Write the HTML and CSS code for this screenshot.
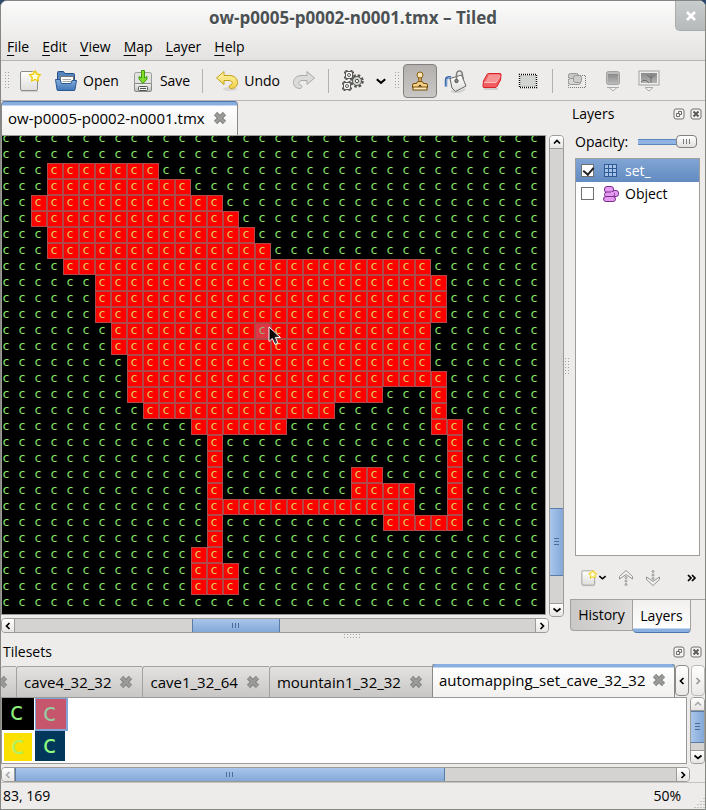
FILE: index.html
```html
<!DOCTYPE html>
<html lang="en">
<head>
<meta charset="utf-8">
<meta name="viewport" content="width=device-width, initial-scale=1">
<title>ow-p0005-p0002-n0001.tmx – Tiled</title>
<link rel="stylesheet" href="styles.css">
</head>
<body>
<svg class="defs" aria-hidden="true">
  <defs>
    <linearGradient id="paper" x1="0" y1="0" x2="0" y2="1"><stop offset="0" stop-color="#fff"/><stop offset="1" stop-color="#dededb"/></linearGradient>
    <linearGradient id="blue" x1="0" y1="0" x2="0" y2="1"><stop offset="0" stop-color="#86b0df"/><stop offset="1" stop-color="#3f74b5"/></linearGradient>
    <linearGradient id="gold" x1="0" y1="0" x2="0" y2="1"><stop offset="0" stop-color="#fff6b0"/><stop offset="1" stop-color="#f3d24a"/></linearGradient>
    <linearGradient id="grey" x1="0" y1="0" x2="0" y2="1"><stop offset="0" stop-color="#f4f4f2"/><stop offset="1" stop-color="#b9bbb6"/></linearGradient>
    <linearGradient id="dim" x1="0" y1="0" x2="0" y2="1"><stop offset="0" stop-color="#8a8a8a"/><stop offset="1" stop-color="#b4b4b4"/></linearGradient>
    <linearGradient id="arrow" x1="0" y1="0" x2="1" y2="1"><stop offset="0.4" stop-color="#000"/><stop offset="1" stop-color="#777"/></linearGradient>
    <symbol id="cross" viewBox="0 0 14 14"><path d="M2.500 2.500L11.500 11.500M11.500 2.500L2.500 11.500" fill="none" stroke="#858683" stroke-width="4.600"/><path d="M2.800 2.800L11.200 11.200M11.200 2.800L2.800 11.200" fill="none" stroke="#9b9c99" stroke-width="2.600"/></symbol>
    <symbol id="float" viewBox="0 0 12 12"><rect x="1" y="1" width="10" height="10" rx="2" fill="#f4f3f2" stroke="#70706e"/><path d="M5.500 5.500V3.500H8.500V6.500H7M3.500 5.500H6.500V8.500H3.500Z" fill="none" stroke="#6b6b69"/></symbol>
    <symbol id="shut" viewBox="0 0 12 12"><rect x="1" y="1" width="10" height="10" rx="2" fill="#f4f3f2" stroke="#70706e"/><path d="M3.500 3.500L8.500 8.500M8.500 3.500L3.500 8.500" stroke="#5b5b59" stroke-width="2"/></symbol>
    <symbol id="left" viewBox="0 0 10 10"><path d="M6.500 2L3.500 5L6.500 8" fill="none" stroke="currentColor" stroke-width="1.700"/></symbol>
    <symbol id="right" viewBox="0 0 10 10"><path d="M3.500 2L6.500 5L3.500 8" fill="none" stroke="currentColor" stroke-width="1.700"/></symbol>
    <symbol id="up" viewBox="0 0 10 10"><path d="M2 6.500L5 3.500L8 6.500" fill="none" stroke="currentColor" stroke-width="1.700"/></symbol>
    <symbol id="down" viewBox="0 0 10 10"><path d="M1.500 3.500L5 6.500L8.500 3.500" fill="none" stroke="currentColor" stroke-width="1.700"/></symbol>
    <symbol id="new" viewBox="0 0 24 24"><path d="M3 22.500H20" stroke="#cfcecb"/><rect x="2.500" y="2.500" width="17" height="19" rx="1.500" fill="url(#paper)" stroke="#8c8e89"/><circle cx="17" cy="7" r="5" fill="#fff7a8" opacity=".8"/><path d="M17 2L18.700 5.200L22.300 5.800L19.800 8.400L20.300 12L17 10.400L13.700 12L14.200 8.400L11.700 5.800L15.300 5.200Z" fill="#fffde0" stroke="#ecc90b" stroke-width="1.300"/></symbol>
    <symbol id="cog" viewBox="0 0 10 10"><path d="M2.500 0V10M7.500 0V10M0 2.500H10M0 7.500H10" stroke="#555753" stroke-width="2"/><rect x="1.500" y="1.500" width="7" height="7" rx="1.500" fill="#fafafa" stroke="#555753"/><circle cx="5" cy="5" r="1.500" fill="#fff" stroke="#555753"/></symbol>
    <symbol id="gear" viewBox="0 0 14 14"><circle cx="7" cy="7" r="5.500" fill="none" stroke="#555753" stroke-width="2.600" stroke-dasharray="2.500 1.820"/><circle cx="7" cy="7" r="4.500" fill="#d3d5d1" stroke="#555753"/><circle cx="7" cy="7" r="1.700" fill="#eee" stroke="#555753"/></symbol>
  </defs>
</svg>

<div class="window">
  <header class="titlebar">
    <h1>ow-p0005-p0002-n0001.tmx – Tiled</h1>
    <button class="window-close" aria-label="Close window"><svg width="12" height="12" viewBox="0 0 12 12"><path d="M2 2L10 10M10 2L2 10" stroke="#fff" stroke-width="2.600"/></svg></button>
  </header>

  <nav class="menubar">
    <button><u>F</u>ile</button><button><u>E</u>dit</button><button><u>V</u>iew</button><button><u>M</u>ap</button><button><u>L</u>ayer</button><button><u>H</u>elp</button>
  </nav>

  <div class="toolbar">
    <span class="handle"></span>
    <button class="tool" aria-label="New"><svg width="24" height="24"><use href="#new"/></svg></button>
    <button class="tool labelled"><svg width="24" height="24" viewBox="0 0 24 24"><path d="M3.500 20.500V3.500Q3.500 2.500 4.500 2.500H9.500L11 4.500H19.500Q20.500 4.500 20.500 5.500V20.500Z" fill="#5585bd" stroke="#23508a"/><rect x="6.500" y="7.500" width="13" height="10" fill="#fff" stroke="#777"/><path d="M8.500 10.500H17M8.500 12.500H17" stroke="#aaa"/><path d="M1.500 10.500H6L7.500 14.500H17L18 11.500H22.500L21 20.500Q21 21.500 20 21.500H4Q3 21.500 3 20.500Z" fill="url(#blue)" stroke="#2a5994"/></svg>Open</button>
    <button class="tool labelled"><svg width="24" height="24" viewBox="0 0 24 24"><rect x="3.500" y="3.500" width="17" height="13" rx="2" fill="#e2e3e0" stroke="#9a9c97"/><path d="M3.500 14.500H20.500V21Q20.500 22.500 19 22.500H5Q3.500 22.500 3.500 21Z" fill="url(#grey)" stroke="#888a85"/><rect x="7.500" y="17.500" width="9" height="4" rx="1" fill="#eee" stroke="#555753"/><path d="M9 19.500H15" stroke="#555753"/><path d="M10.500 1.500H13.500V9L16 7.500V10L12 14.500L8 10V7.500L10.500 9Z" fill="#7fdc2d" stroke="#3f9b08"/></svg>Save</button>
    <span class="rule"></span>
    <button class="tool labelled"><svg width="24" height="24" viewBox="0 0 24 24"><ellipse cx="15" cy="20" rx="7" ry="2" fill="#d8d7d4"/><path d="M1.500 9L9 2.500V6.500H14C20 6.500 22.500 10 22.500 13.500C22.500 17 20 19.500 16 19.500C14 19.500 13.500 16.500 15.500 16C18.500 15.300 17.500 11.500 14 11.500H9V15.500Z" fill="url(#gold)" stroke="#c2a116"/></svg>Undo</button>
    <button class="tool" aria-label="Redo"><svg width="24" height="24" viewBox="0 0 24 24"><path d="M22.500 9L15 2.500V6.500H10C4 6.500 1.500 10 1.500 13.500C1.500 17 4 19.500 8 19.500C10 19.500 10.500 16.500 8.500 16C5.500 15.300 6.500 11.500 10 11.500H15V15.500Z" fill="#dbdbd9" stroke="#aaaaa8"/></svg></button>
    <span class="rule"></span>
    <button class="tool" aria-label="Commands"><svg width="24" height="24" viewBox="0 0 24 24"><use href="#cog" x="3" y="1" width="10" height="10"/><use href="#cog" x="1" y="12" width="10" height="10"/><use href="#gear" x="9" y="5" width="14" height="14"/></svg></button>
    <button class="tool slim" aria-label="More commands"><svg width="12" height="12"><use href="#down"/></svg></button>
    <span class="handle"></span>
    <button class="tool pressed" aria-label="Stamp brush"><svg width="24" height="24" viewBox="0 0 24 24"><path d="M10.500 7.500H13.500L13 13H11Z" fill="#f2c777" stroke="#76500a"/><circle cx="12" cy="6" r="3" fill="#fae3b4" stroke="#8a5e0f"/><path d="M8.500 14.500Q8.500 12.500 11 12.500H13Q15.500 12.500 15.500 14.500H18Q19.500 14.500 19.500 16V18.500H4.500V16Q4.500 14.500 6 14.500Z" fill="#f5cf85" stroke="#76500a"/><rect x="5" y="18" width="14" height="3" fill="#fbe8bd" stroke="#76500a"/><path d="M10 17.500H14L12 15.500Z" fill="#402a00"/></svg></button>
    <button class="tool" aria-label="Bucket fill"><svg width="24" height="24" viewBox="0 0 24 24"><path d="M7 22Q15 25 21 20" fill="none" stroke="#d0d0cd" stroke-width="2"/><path d="M6 9.500L17.500 6L22 17L11.500 22.500L8 19Z" fill="url(#paper)" stroke="#656764"/><path d="M12.500 12V5Q13 1.500 16 2Q18.500 2.500 18.500 7L19.500 10" fill="none" stroke="#7d7f7a" stroke-width="1.500"/><circle cx="12.500" cy="12" r="1.700" fill="#888a85" stroke="#555753"/><path d="M7 8.500Q2 7.500 2 11V17.500" fill="none" stroke="#2f5fa4" stroke-width="2.400"/><path d="M7 8.500Q2.500 8 2.300 11V17" fill="none" stroke="#87a9da"/></svg></button>
    <button class="tool" aria-label="Eraser"><svg width="24" height="24" viewBox="0 0 24 24"><path d="M4 20H18" stroke="#cfcecb" stroke-width="2"/><path d="M8.500 4.500H20Q21.500 4.500 21 6.500L20.500 11L17 17.500Q16.500 18.500 15 18.500H4Q2.500 18.500 3 16.500L3.500 12L7 5.500Q7.500 4.500 8.500 4.500Z" fill="#f15d61" stroke="#d92228"/><path d="M9 5.500H20L16 13H5Z" fill="#f69494"/><path d="M4 13.500H16L20 7" fill="none" stroke="#fbc1c0"/></svg></button>
    <button class="tool" aria-label="Rectangular select"><svg width="24" height="24" viewBox="0 0 24 24"><rect x="3.500" y="5.500" width="17" height="13" fill="#d2d4d1" stroke="#fff"/><rect x="3.500" y="5.500" width="17" height="13" fill="none" stroke="#000" stroke-width="1.400" stroke-dasharray="1 1" stroke-dashoffset=".5"/></svg></button>
    <span class="rule"></span>
    <button class="tool" aria-label="Select objects"><svg width="24" height="24" viewBox="0 0 24 24"><rect x="3.500" y="6.500" width="17" height="12" fill="none" stroke="#777" stroke-dasharray="1 1" stroke-dashoffset=".5"/><rect x="3.500" y="4.500" width="10" height="5" rx="2" fill="#c9c9c7" stroke="#969694"/><rect x="3.500" y="9.500" width="12" height="6" rx="2" fill="#d7d7d5" stroke="#969694"/><rect x="8.500" y="6.500" width="8" height="7" rx="2" fill="#cbcbc9" stroke="#969694"/></svg></button>
    <button class="tool" aria-label="Insert tile object"><svg width="24" height="24" viewBox="0 0 24 24"><rect x="5.500" y="2.500" width="13" height="13" rx="2" fill="#bbb" stroke="#a2a2a0"/><rect x="7" y="5" width="10" height="9" fill="url(#dim)"/><path d="M6 18.500H18" stroke="#aaa"/><path d="M8 18.500H16L12 22Z" fill="#f1f1ef" stroke="#aaa"/></svg></button>
    <button class="tool" aria-label="Insert image"><svg width="24" height="24" viewBox="0 0 24 24"><rect x="2" y="2" width="20" height="14" fill="#eee" stroke="#a2a2a0"/><rect x="4" y="4" width="16" height="10" fill="url(#dim)"/><path d="M14 14V9M10 6L14 9L18 6M14 9V5M4 13Q8 9 12 14" fill="none" stroke="#6f6f6d"/><path d="M8 18.500H16L12 22Z" fill="#f1f1ef" stroke="#aaa"/></svg></button>
  </div>

  <div class="workspace">
    <main class="editor">
      <div class="tabs">
        <div class="tab active"><span>ow-p0005-p0002-n0001.tmx</span><button aria-label="Close tab"><svg width="14" height="14"><use href="#cross"/></svg></button></div>
      </div>
      <div class="scroll-area">
        <div class="view map-view">
          <div class="map" id="map"></div>
          <svg class="pointer" width="16" height="20" viewBox="0 0 16 20"><path d="M1 1V15.500L4.300 12.500L7 18.500L9.800 17L7.500 11.500H12.500Z" fill="url(#arrow)" stroke="#fff"/></svg>
        </div>
        <div class="bar vertical">
          <button aria-label="Scroll up"><svg width="10" height="10"><use href="#up"/></svg></button>
          <div class="track"><i class="space before-v"></i><i class="thumb thumb-v"></i></div>
          <button aria-label="Scroll down"><svg width="10" height="10"><use href="#down"/></svg></button>
        </div>
        <div class="bar horizontal">
          <button aria-label="Scroll left"><svg width="10" height="10"><use href="#left"/></svg></button>
          <div class="track"><i class="space before-h"></i><i class="thumb thumb-h"></i></div>
          <button aria-label="Scroll right"><svg width="10" height="10"><use href="#right"/></svg></button>
        </div>
      </div>
    </main>
    <div class="splitter upright"><i></i></div>
    <aside class="dock">
      <div class="dock-title"><h2>Layers</h2><button aria-label="Float Layers"><svg width="12" height="12"><use href="#float"/></svg></button><button aria-label="Close Layers"><svg width="12" height="12"><use href="#shut"/></svg></button></div>
      <div class="opacity"><label for="opacity">Opacity:</label><input type="range" id="opacity" value="100"></div>
      <ul class="layers">
        <li class="selected"><input type="checkbox" id="layer-set" checked><label for="layer-set"><svg width="16" height="16" viewBox="0 0 16 16"><rect x="1" y="1" width="13" height="13" fill="#2f5995"/><path d="M2 2h3v3h-3zM6 2h3v3h-3zM10 2h3v3h-3zM2 6h3v3h-3zM6 6h3v3h-3zM10 6h3v3h-3zM2 10h3v3h-3zM6 10h3v3h-3zM10 10h3v3h-3z" fill="#a5c2e8"/></svg>set_</label></li>
        <li><input type="checkbox" id="layer-object"><label for="layer-object"><svg width="16" height="16" viewBox="0 0 16 16"><g fill="#e39af0" stroke="#7b2d8c"><rect x="8.500" y="4.500" width="7" height="6" rx="2.500"/><rect x="1.500" y=".5" width="9" height="6" rx="2.500"/><rect x="1.500" y="6" width="10" height="5" rx="2.500"/><rect x=".5" y="10.500" width="12" height="5" rx="2.500"/></g><path d="M8 6H11V9H8Z" fill="#e39af0"/></svg>Object</label></li>
      </ul>
      <div class="layer-actions">
        <button aria-label="New layer"><svg width="18" height="20" viewBox="0 0 24 24"><use href="#new"/></svg><svg width="9" height="9" viewBox="0 0 10 10"><use href="#down"/></svg></button>
        <button aria-label="Raise layer"><svg width="16" height="18" viewBox="0 0 16 18"><path d="M1.500 10V7.500L8 1.500L14.500 7.500V10L8 5.500Z" fill="#f3f3f2" stroke="#939391"/><g fill="none" stroke="#939391"><circle cx="8" cy="8.500" r="1"/><circle cx="8" cy="12" r="1"/><circle cx="8" cy="15.500" r="1"/></g></svg></button>
        <button aria-label="Lower layer"><svg width="16" height="18" viewBox="0 0 16 18"><path d="M1.500 8V10.500L8 16.500L14.500 10.500V8L8 12.500Z" fill="#f3f3f2" stroke="#939391"/><g fill="none" stroke="#939391"><circle cx="8" cy="2.500" r="1"/><circle cx="8" cy="6" r="1"/><circle cx="8" cy="9.500" r="1"/></g></svg></button>
        <button class="more" aria-label="More layer actions"><svg width="10" height="10" viewBox="0 0 10 10"><path d="M1 2L4 5L1 8M5 2L8 5L5 8" fill="none" stroke="#000" stroke-width="1.700"/></svg></button>
      </div>
      <div class="dock-tabs"><button>History</button><button class="current">Layers</button></div>
    </aside>
  </div>

  <div class="splitter level"><i></i></div>

  <section class="tilesets">
    <div class="dock-title"><h2>Tilesets</h2><button aria-label="Float Tilesets"><svg width="12" height="12"><use href="#float"/></svg></button><button aria-label="Close Tilesets"><svg width="12" height="12"><use href="#shut"/></svg></button></div>
    <div class="tabs">
      <div class="tab cut"><button aria-label="Close tileset"><svg width="14" height="14"><use href="#cross"/></svg></button></div>
      <div class="tab"><span>cave4_32_32</span><button aria-label="Close tileset"><svg width="14" height="14"><use href="#cross"/></svg></button></div>
      <div class="tab"><span>cave1_32_64</span><button aria-label="Close tileset"><svg width="14" height="14"><use href="#cross"/></svg></button></div>
      <div class="tab"><span>mountain1_32_32</span><button aria-label="Close tileset"><svg width="14" height="14"><use href="#cross"/></svg></button></div>
      <div class="tab active"><span>automapping_set_cave_32_32</span><button aria-label="Close tileset"><svg width="14" height="14"><use href="#cross"/></svg></button></div>
      <div class="tab-scroll"><button aria-label="Previous tabs"><svg width="10" height="10"><use href="#left"/></svg></button><button aria-label="Next tabs" disabled><svg width="10" height="10"><use href="#right"/></svg></button></div>
    </div>
    <div class="scroll-area">
      <div class="view">
        <div class="palette"><span class="black">c</span><span class="chosen">c</span><span class="yellow">c</span><span class="navy">c</span></div>
      </div>
      <div class="bar vertical">
        <button aria-label="Scroll up" disabled><svg width="10" height="10"><use href="#up"/></svg></button>
        <div class="track"><i class="thumb thumb-tv"></i></div>
        <button aria-label="Scroll down"><svg width="10" height="10"><use href="#down"/></svg></button>
      </div>
      <div class="bar horizontal">
        <button aria-label="Scroll left" disabled><svg width="10" height="10"><use href="#left"/></svg></button>
        <div class="track"><i class="thumb thumb-th"></i></div>
        <button aria-label="Scroll right"><svg width="10" height="10"><use href="#right"/></svg></button>
      </div>
    </div>
  </section>

  <footer class="status"><span>83, 169</span><span class="zoom">50%</span><svg width="12" height="12" viewBox="0 0 12 12"><path d="M11 1v1M11 4v1M8 4v1M11 7v1M8 7v1M5 7v1M11 10v1M8 10v1M5 10v1M2 10v1" stroke="#9b9b98"/></svg></footer>
</div>
<script src="map.js"></script>
</body>
</html>
```
FILE: map.js
```js
// Filled tiles of each map row, as [first, last] column pairs.
const rows = [
  [], [],
  [[3, 9]], [[3, 11]], [[2, 13]], [[2, 14]], [[3, 15]], [[3, 16]],
  [[4, 26]], [[6, 27]], [[6, 27]], [[6, 27]], [[7, 26]], [[7, 26]],
  [[8, 26]], [[8, 27]], [[8, 23], [27, 27]], [[9, 20], [27, 27]],
  [[12, 17], [27, 28]], [[13, 13], [28, 28]], [[13, 13], [28, 28]],
  [[13, 13], [22, 23], [28, 28]], [[13, 13], [22, 25], [28, 28]],
  [[13, 25], [28, 28]], [[13, 13], [24, 28]], [[13, 13]],
  [[12, 13]], [[12, 14]], [[12, 14]], []
];
const columns = 34;
const map = document.getElementById("map");

rows.forEach((ranges, y) => {
  for (let x = 0; x < columns; x++) {
    const tile = document.createElement("span");
    tile.textContent = "c";
    if (ranges.some(([from, to]) => x >= from && x <= to)) tile.className = "filled";
    if (x === 16 && y === 12) tile.classList.add("hover");
    map.append(tile);
  }
});
```
FILE: styles.css
```css
* { box-sizing: border-box; }

body {
  margin: 0;
  background: #2f4a6d;
  color: #000;
  font: 15px/20px "Open Sans", "Noto Sans", sans-serif;
}

button {
  display: flex;
  align-items: center;
  justify-content: center;
  margin: 0;
  padding: 0;
  border: 0;
  background: none;
  color: inherit;
  font: inherit;
}

svg { display: block; flex: none; }
.defs { position: absolute; width: 0; height: 0; }
h1, h2 { margin: 0; font-size: 17px; line-height: 20px; }
h2 { font-weight: 400; font-size: 14px; }

.window {
  display: flex;
  flex-direction: column;
  height: 100vh;
  min-height: 480px;
  border: 1px solid #868683;
  border-radius: 7px 7px 0 0;
  background: #edeceb;
  overflow: hidden;
}

/* Title and menus */
.titlebar {
  display: grid;
  grid-template-columns: 30px 1fr 30px;
  align-items: center;
  height: 34px;
  flex: none;
  background: linear-gradient(#fbfbfb, #eeedec);
}
.titlebar h1 { grid-column: 2; text-align: center; color: #4b5053; text-shadow: 0 1px #fff; }
.window-close {
  align-self: start;
  height: 30px;
  border: 1px solid #a9adad;
  border-width: 0 0 1px 1px;
  border-radius: 0 0 0 5px;
  background: linear-gradient(#c9cccc, #b6baba);
}
.menubar {
  display: flex;
  gap: 13px;
  height: 26px;
  flex: none;
  padding: 0 6px 2px;
  border-bottom: 1px solid #b7b5b2;
  background: linear-gradient(#eeedec, #e4e2e0);
  font-size: 14px;
}
.menubar u { text-underline-offset: 3px; text-decoration-thickness: 1px; }

/* Toolbar */
.toolbar {
  display: flex;
  align-items: center;
  gap: 2px;
  height: 40px;
  flex: none;
  padding: 0 1px;
  border-bottom: 1px solid #b7b5b2;
  font-size: 14px;
}
.handle {
  width: 6px;
  height: 18px;
  flex: none;
  margin-left: 3px;
}
.handle, .splitter i { background: conic-gradient(from 270deg at 1px 1px, #a3a19e 90deg, transparent 0) 0 0 / 3px 3px; }
.tool { width: 34px; height: 34px; flex: none; }
.tool.labelled { width: auto; gap: 5px; padding: 0 5px; }
.tool.slim { width: 18px; }
.tool.pressed {
  border: 1px solid #82807d;
  border-radius: 4px;
  background: linear-gradient(#b3b0ad, #c9c7c4);
}
.rule { width: 1px; height: 24px; flex: none; margin: 0 5px; background: #b3b1ae; }

/* Workspace */
.workspace { display: flex; flex: 1; min-height: 0; }
.editor { display: flex; flex-direction: column; flex: 1; min-width: 0; }

.tabs { display: flex; align-items: flex-end; height: 34px; flex: none; }
.tab {
  display: flex;
  align-items: center;
  gap: 8px;
  height: 31px;
  flex: none;
  padding: 0 9px 0 7px;
  border: 1px solid #a3a19e;
  border-width: 1px 0 0 1px;
  border-radius: 3px 0 0 0;
  background: linear-gradient(#e3e2e0, #c9c7c5);
}
.tab.active {
  height: 34px;
  padding: 0 10px 1px 6px;
  border: 1px solid #8a8987;
  border-top-color: #4c76ab;
  border-bottom: 0;
  border-radius: 4px 4px 0 0;
  background: linear-gradient(#88afe0 3px, #fff 4px, #f1f0ef);
}

.scroll-area {
  display: grid;
  grid-template: 1fr 15px / 1fr 15px;
  gap: 3px 0;
  flex: 1;
  min-height: 0;
}
.view {
  margin-right: 3px;
  border: 1px solid #9c9a97;
  background: #fff;
  overflow: hidden;
}
.map-view { position: relative; background: #000; }
.map {
  display: grid;
  grid-template-columns: repeat(34, 16px);
  grid-auto-rows: 16px;
  margin: -5px 0 0 -3px;
  color: #8ae566;
  font: 12px/13px "DejaVu Sans", sans-serif;
  text-align: center;
}
.map span { padding-right: 2px; border: 1px solid transparent; }
.map .filled { border-color: #b34747; background: #f00; color: #dccb58; }
.map .hover { background: #de3444; color: #a0b070; }
.pointer { position: absolute; left: 266px; top: 190px; }

/* Scroll bars */
.bar {
  display: flex;
  border: 1px solid #9d9b98;
  border-radius: 4px;
  background: #d5d3d1;
  overflow: hidden;
}
.bar button { width: 13px; height: 13px; flex: none; background: linear-gradient(#fff, #e6e5e3); }
.bar button:disabled { color: #aaa; }
.track { display: flex; flex: 1; min-width: 0; min-height: 0; }
.vertical, .vertical .track { flex-direction: column; }
.vertical { margin-bottom: -2px; }
.horizontal button { border-right: 1px solid #9d9b98; }
.horizontal button:last-child { border-right: 0; border-left: 1px solid #9d9b98; }
.vertical button { border-bottom: 1px solid #9d9b98; }
.vertical button:last-child { border-bottom: 0; border-top: 1px solid #9d9b98; }
.space, .thumb { flex: none; }
.thumb {
  display: flex;
  align-items: center;
  justify-content: center;
  border: 1px solid #587da9;
  background: linear-gradient(#a9c6eb, #83a8d8);
}
.horizontal .thumb { border-width: 0 1px; }
.vertical .thumb { border-width: 1px 0; background: linear-gradient(90deg, #a9c6eb, #83a8d8); }
.thumb::after { content: ""; width: 7px; height: 5px; background: repeating-linear-gradient(90deg, #4a6d9c 0 1px, transparent 1px 3px); }
.vertical .thumb::after { width: 5px; height: 7px; background: repeating-linear-gradient(#4a6d9c 0 1px, transparent 1px 3px); }
.before-v { height: 79%; }
.thumb-v { height: 15%; }
.before-h { width: 34%; }
.thumb-h { width: 17%; }
.thumb-tv { height: 81%; }
.thumb-th { width: 65%; }

.splitter { display: flex; align-items: center; justify-content: center; flex: none; }
.upright { width: 6px; }
.upright i { width: 4px; height: 18px; }
.level { height: 6px; }
.level i { width: 18px; height: 5px; }

/* Layers dock */
.dock { display: flex; flex-direction: column; width: 135px; flex: none; }
.dock-title { display: flex; align-items: center; gap: 5px; height: 26px; flex: none; padding: 0 3px 0 2px; }
.dock-title h2 { flex: 1; }
.opacity { display: flex; align-items: center; gap: 10px; height: 31px; padding: 0 8px 2px 5px; font-size: 14px; }
.opacity input {
  appearance: none;
  flex: 1;
  width: 0;
  height: 14px;
  margin: 0;
  background: linear-gradient(#5c85ba 1px, #8fb3e2 1px 5px, #5c85ba 5px) 0 4px / 100% 6px no-repeat;
}
.opacity input::-webkit-slider-thumb {
  appearance: none;
  width: 21px;
  height: 13px;
  border: 1px solid #83817f;
  border-radius: 4px;
  background:
    repeating-linear-gradient(90deg, #777 0 1px, transparent 1px 3px) 50% 50% / 7px 5px no-repeat,
    linear-gradient(#fff, #e0dfdd);
}
.layers {
  flex: 1;
  min-height: 0;
  margin: 0 5px;
  padding: 0;
  border: 1px solid #a09e9b;
  background: #fff;
  list-style: none;
  font-size: 14px;
}
.layers li { display: flex; align-items: center; gap: 9px; height: 23px; padding-left: 5px; }
.layers label { display: flex; align-items: center; gap: 6px; }
.layers .selected { background: linear-gradient(#81a5d4, #628bc1); color: #fff; }
.layers input { appearance: none; width: 13px; height: 13px; margin: 0; border: 1px solid #70706e; background: #fff; }
.layers input:checked::after {
  content: "";
  display: block;
  width: 5px;
  height: 8px;
  margin: 0 0 0 3px;
  border: solid #222;
  border-width: 0 2px 2px 0;
  transform: rotate(40deg);
}
.layer-actions { display: flex; align-items: center; gap: 11px; height: 43px; flex: none; padding: 0 8px 0 10px; }
.more { margin-left: auto; }
.dock-tabs { display: flex; align-items: flex-start; height: 34px; flex: none; border-top: 1px solid #a3a19e; }
.dock-tabs button {
  width: 63px;
  height: 31px;
  border: 1px solid #a3a19e;
  border-top: 0;
  border-radius: 0 0 0 4px;
  background: linear-gradient(90deg, #cbc9c7, #dddcda);
  font-size: 14px;
}
.dock-tabs .current {
  width: 58px;
  height: 33px;
  border-left: 0;
  border-bottom-color: #4c76ab;
  border-radius: 0 0 4px 4px;
  background: linear-gradient(#f1f0ef, #fff 28px, #88afe0 29px);
}

/* Tilesets dock */
.tilesets { display: flex; flex-direction: column; height: 143px; flex: none; }
.tilesets .dock-title { height: 25px; }
.tilesets .tabs { height: 33px; overflow: hidden; }
.tilesets .active { gap: 6px; padding-right: 8px; }
.cut { width: 15px; justify-content: flex-end; padding: 0 8px 0 0; border-left: 0; }
.tab-scroll { display: flex; flex: none; gap: 2px; margin-left: auto; padding-bottom: 1px; }
.tab-scroll button { width: 14px; height: 31px; border: 1px solid #8e8c89; border-radius: 4px; background: linear-gradient(#fff, #e9e8e6); }
.tab-scroll button:disabled { border-color: #bcbab7; color: #999; }
.tilesets .vertical { margin-bottom: 0; }
.tilesets .scroll-area { grid-template: 67px 15px / 1fr 15px; }
.palette {
  display: grid;
  grid-template-columns: 33px 33px;
  grid-auto-rows: 33px;
  font: 24px/29px "DejaVu Sans", sans-serif;
  text-align: center;
  color: #8fef7b;
}
.palette span { width: 32px; height: 32px; padding-right: 3px; border: 0 solid #fff; background-clip: padding-box; }
.palette .black { background-color: #000; }
.palette .chosen { width: 33px; height: 33px; border: solid #7fa5d8; border-width: 1px 2px 2px 1px; background-color: #c6566c; color: #94cba0; }
.palette .yellow { padding-right: 1px; border-width: 2px; background-color: #fbe000; color: #aef26a; line-height: 26px; }
.palette .navy { width: 30px; height: 30px; padding-right: 1px; background-color: #00375a; color: #90ff80; }

.status { display: flex; align-items: center; height: 27px; flex: none; padding: 0 0 0 2px; border-top: 1px solid #c5c3c0; font-size: 14px; }
.zoom { margin-left: auto; margin-right: 12px; }
.status svg { align-self: flex-end; }
```
